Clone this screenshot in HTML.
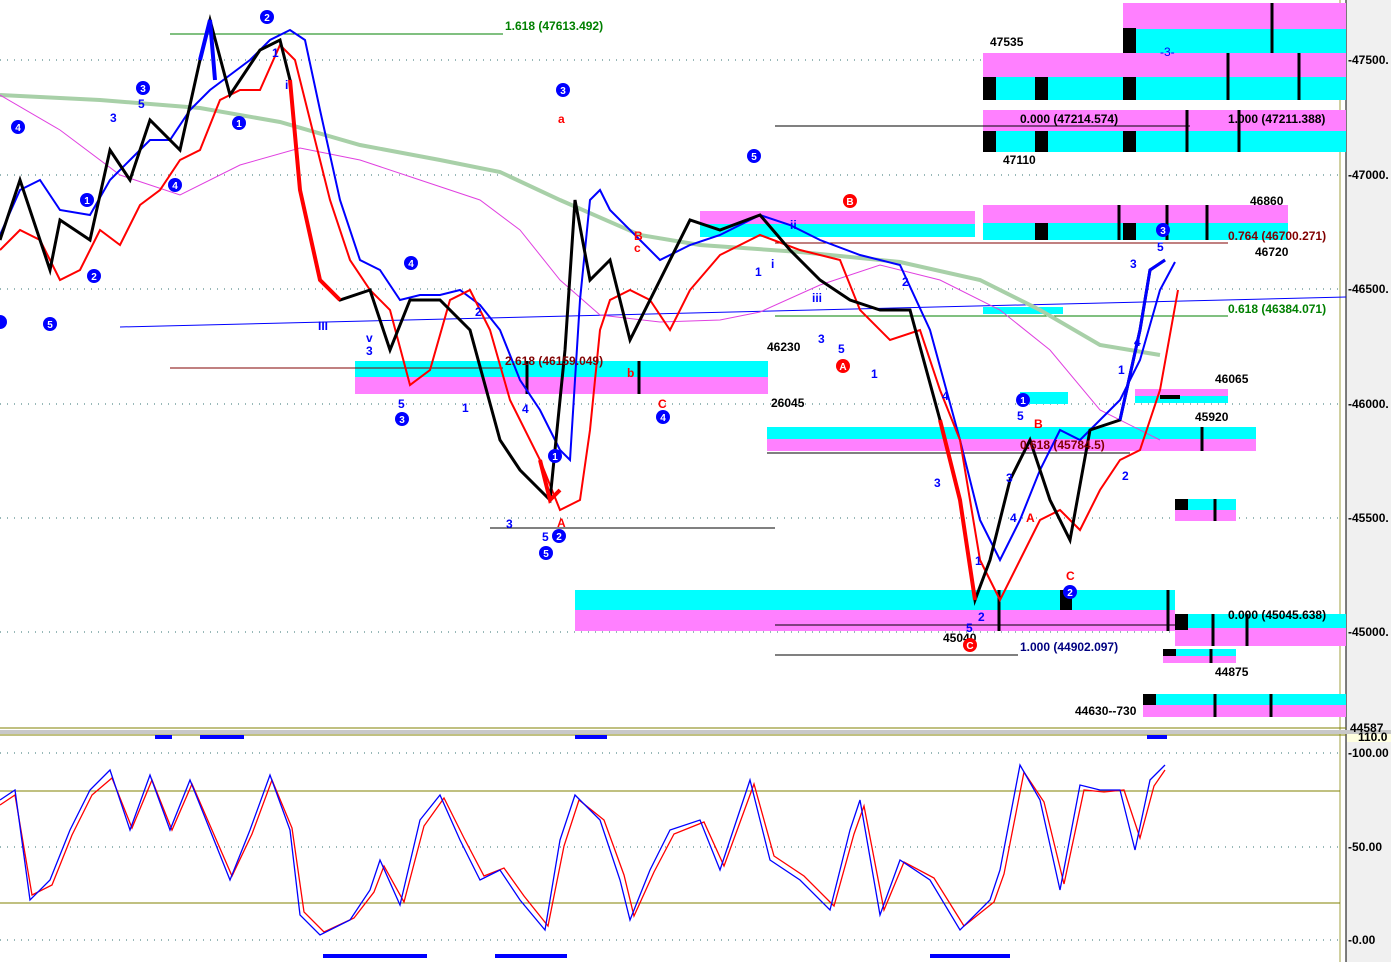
<!DOCTYPE html>
<html><head><meta charset="utf-8"><style>
html,body{margin:0;padding:0;background:#fff;}
svg{display:block;font-family:"Liberation Sans",sans-serif;}
.b{font-weight:bold;font-size:12px;}
</style></head><body>
<svg width="1391" height="962" viewBox="0 0 1391 962" xmlns="http://www.w3.org/2000/svg">
<rect width="1391" height="962" fill="#fff"/>
<!-- right axis -->
<rect x="1346" y="0" width="45" height="962" fill="#f0f0f0"/>
<line x1="1346" y1="0" x2="1346" y2="962" stroke="#000"/>
<line x1="1340" y1="0" x2="1340" y2="962" stroke="#a0a040"/>
<!-- gridlines -->
<g stroke="#307070" stroke-dasharray="1,6">
<line x1="0" y1="60" x2="1340" y2="60"/><line x1="0" y1="175" x2="1340" y2="175"/>
<line x1="0" y1="289" x2="1340" y2="289"/><line x1="0" y1="404" x2="1340" y2="404"/>
<line x1="0" y1="518" x2="1340" y2="518"/><line x1="0" y1="632" x2="1340" y2="632"/>
<line x1="0" y1="753" x2="1340" y2="753"/><line x1="0" y1="847" x2="1340" y2="847"/>
<line x1="0" y1="940" x2="1340" y2="940"/>
</g>
<!-- boxes -->
<g>
<rect x="1123" y="3" width="223" height="26" fill="#ff80ff"/><rect x="1123" y="29" width="223" height="24" fill="#00ffff"/>
<rect x="983" y="53" width="363" height="24" fill="#ff80ff"/><rect x="983" y="77" width="363" height="23" fill="#00ffff"/>
<rect x="983" y="110" width="363" height="21" fill="#ff80ff"/><rect x="983" y="131" width="363" height="21" fill="#00ffff"/>
<rect x="983" y="205" width="305" height="18" fill="#ff80ff"/><rect x="983" y="223" width="305" height="17" fill="#00ffff"/>
<rect x="700" y="211" width="275" height="13" fill="#ff80ff"/><rect x="700" y="224" width="275" height="13" fill="#00ffff"/>
<rect x="355" y="361" width="413" height="16" fill="#00ffff"/><rect x="355" y="377" width="413" height="17" fill="#ff80ff"/>
<rect x="767" y="427" width="489" height="12" fill="#00ffff"/><rect x="767" y="439" width="489" height="12" fill="#ff80ff"/>
<rect x="575" y="590" width="600" height="20" fill="#00ffff"/><rect x="575" y="610" width="600" height="21" fill="#ff80ff"/>
<rect x="1175" y="614" width="171" height="14" fill="#00ffff"/><rect x="1175" y="628" width="171" height="18" fill="#ff80ff"/>
<rect x="1135" y="389" width="93" height="7" fill="#ff80ff"/><rect x="1135" y="396" width="93" height="7" fill="#00ffff"/>
<rect x="1175" y="499" width="61" height="11" fill="#00ffff"/><rect x="1175" y="510" width="61" height="11" fill="#ff80ff"/>
<rect x="1163" y="649" width="73" height="7" fill="#00ffff"/><rect x="1163" y="656" width="73" height="7" fill="#ff80ff"/>
<rect x="1143" y="694" width="203" height="11" fill="#00ffff"/><rect x="1143" y="705" width="203" height="12" fill="#ff80ff"/>
<rect x="1020" y="392" width="48" height="12" fill="#00ffff"/>
<rect x="983" y="307" width="80" height="7" fill="#00ffff"/>
</g>
<!-- black markers -->
<g fill="#000">
<rect x="1123" y="28" width="13" height="25"/><rect x="983" y="77" width="13" height="23"/><rect x="1035" y="77" width="13" height="23"/><rect x="1123" y="77" width="13" height="23"/>
<rect x="983" y="131" width="13" height="21"/><rect x="1035" y="131" width="13" height="21"/><rect x="1123" y="131" width="13" height="21"/>
<rect x="1035" y="223" width="13" height="17"/><rect x="1123" y="223" width="13" height="17"/>
<rect x="1175" y="499" width="13" height="11"/><rect x="1175" y="614" width="13" height="16"/><rect x="1163" y="649" width="13" height="7"/><rect x="1143" y="694" width="13" height="11"/>
<rect x="1060" y="590" width="12" height="20"/><rect x="1160" y="395" width="20" height="4"/>
</g>
<g stroke="#000" stroke-width="3">
<line x1="1272" y1="3" x2="1272" y2="53"/><line x1="1228" y1="53" x2="1228" y2="100"/><line x1="1299" y1="53" x2="1299" y2="100"/>
<line x1="1187" y1="110" x2="1187" y2="152"/><line x1="1239" y1="110" x2="1239" y2="152"/>
<line x1="1119" y1="205" x2="1119" y2="240"/><line x1="1167" y1="205" x2="1167" y2="240"/><line x1="1207" y1="205" x2="1207" y2="240"/>
<line x1="1202" y1="427" x2="1202" y2="451"/><line x1="1215" y1="499" x2="1215" y2="521"/><line x1="1213" y1="614" x2="1213" y2="646"/><line x1="1247" y1="614" x2="1247" y2="646"/>
<line x1="1211" y1="649" x2="1211" y2="663"/><line x1="1215" y1="694" x2="1215" y2="717"/><line x1="1271" y1="694" x2="1271" y2="717"/>
<line x1="1168" y1="590" x2="1168" y2="631"/><line x1="999" y1="590" x2="999" y2="631"/><line x1="639" y1="361" x2="639" y2="394"/><line x1="527" y1="361" x2="527" y2="394"/>
</g>
<!-- horizontal fib lines -->
<line x1="170" y1="34" x2="503" y2="34" stroke="#008000"/>
<line x1="775" y1="126" x2="1190" y2="126" stroke="#000"/>
<line x1="775" y1="243" x2="1228" y2="243" stroke="#800000"/>
<line x1="775" y1="316" x2="1228" y2="316" stroke="#008000"/>
<line x1="120" y1="327" x2="1346" y2="297" stroke="#0000ff"/>
<line x1="170" y1="368" x2="503" y2="368" stroke="#800000"/>
<line x1="490" y1="528" x2="775" y2="528" stroke="#000"/>
<line x1="775" y1="625" x2="1175" y2="625" stroke="#000"/>
<line x1="775" y1="655" x2="1018" y2="655" stroke="#000"/>
<line x1="767" y1="453" x2="1130" y2="453" stroke="#000"/>
<!-- MAs -->
<polyline fill="none" stroke="#a8d0a8" stroke-width="4" points="0,95 100,100 200,108 280,122 360,145 440,160 500,172 560,200 640,235 700,245 800,252 900,262 980,280 1040,310 1100,345 1160,355"/>
<polyline fill="none" stroke="#e040e0" stroke-width="1" points="0,95 60,130 120,175 180,195 240,165 300,148 360,160 420,180 480,200 520,230 560,280 600,315 660,322 720,320 760,312 820,285 880,265 940,280 1000,310 1050,350 1100,410 1160,440"/>
<!-- blue/red envelopes -->
<polyline fill="none" stroke="#0000ff" stroke-width="2" points="0,235 20,190 40,180 60,210 90,215 110,180 130,160 150,140 170,140 190,110 210,90 230,75 250,60 270,40 290,30 305,40 320,110 340,200 360,260 380,270 400,300 420,295 440,295 460,290 480,305 500,330 520,380 540,410 560,450 570,460 580,300 590,200 600,190 610,210 640,240 660,260 690,245 720,235 760,215 790,225 820,240 860,255 900,265 930,330 960,440 980,520 1000,560 1020,520 1040,470 1060,430 1080,440 1100,420 1120,400 1140,360 1160,290 1175,262"/>
<polyline fill="none" stroke="#ff0000" stroke-width="2" points="0,250 20,230 40,240 60,280 80,270 100,230 120,245 140,205 160,190 180,160 200,150 220,100 240,90 260,90 280,45 295,60 310,120 330,200 350,260 370,290 390,310 410,385 430,370 450,300 470,290 490,330 510,400 540,460 560,510 580,500 590,430 600,330 610,300 630,290 650,300 670,330 690,290 720,255 760,235 800,250 840,260 860,310 890,340 920,330 940,390 960,440 980,560 1000,600 1020,560 1040,520 1060,510 1080,530 1100,490 1120,460 1140,450 1160,390 1178,290"/>
<!-- price path (candles approx) -->
<polyline fill="none" stroke="#000" stroke-width="3" points="0,240 20,180 50,270 60,220 90,240 110,150 130,180 150,120 180,150 200,60 210,20 230,95 260,50 280,40 290,80 300,190 320,280 340,300 370,290 390,350 410,300 440,300 470,330 500,440 520,470 550,500 565,350 575,200 590,280 610,260 630,340 660,280 690,220 720,230 760,215 790,250 820,280 850,300 880,310 910,310 940,420 960,500 975,600 990,560 1010,480 1030,440 1050,500 1070,540 1090,430 1120,420 1140,330 1150,270 1165,260"/>
<polyline fill="none" stroke="#ff0000" stroke-width="4" points="290,80 300,190 320,280 340,300"/>
<polyline fill="none" stroke="#ff0000" stroke-width="4" points="540,460 550,500 560,490"/>
<polyline fill="none" stroke="#ff0000" stroke-width="4" points="940,420 960,500 975,600"/>
<polyline fill="none" stroke="#0000ff" stroke-width="4" points="200,60 210,20 215,80"/>
<polyline fill="none" stroke="#0000ff" stroke-width="3" points="1120,420 1140,330 1150,270 1165,260"/>
<!-- labels -->
<g class="b">
<text x="505" y="30" fill="#008000">1.618 (47613.492)</text>
<text x="990" y="46">47535</text>
<text x="1020" y="123">0.000 (47214.574)</text>
<text x="1228" y="123">1.000 (47211.388)</text>
<text x="1003" y="164">47110</text>
<text x="1250" y="205">46860</text>
<text x="1228" y="240" fill="#800000">0.764 (46700.271)</text>
<text x="1255" y="256">46720</text>
<text x="1228" y="313" fill="#008000">0.618 (46384.071)</text>
<text x="767" y="351">46230</text>
<text x="505" y="365" fill="#800000">2.618 (46159.049)</text>
<text x="1215" y="383">46065</text>
<text x="771" y="407">26045</text>
<text x="1195" y="421">45920</text>
<text x="1020" y="449" fill="#800000">0.618 (45784.5)</text>
<text x="1228" y="619">0.000 (45045.638)</text>
<text x="943" y="642">45040</text>
<text x="1020" y="651" fill="#000080">1.000 (44902.097)</text>
<text x="1215" y="676">44875</text>
<text x="1075" y="715">44630--730</text>
<text x="1160" y="56" fill="#0000ff" font-weight="normal">-3-</text>
</g>
<!-- wave circles -->
<g fill="#0000ff">
<circle cx="18" cy="127" r="7"/><circle cx="143" cy="88" r="7"/><circle cx="87" cy="200" r="7"/><circle cx="175" cy="185" r="7"/><circle cx="94" cy="276" r="7"/><circle cx="50" cy="324" r="7"/><circle cx="0" cy="322" r="7"/>
<circle cx="239" cy="123" r="7"/><circle cx="267" cy="17" r="7"/><circle cx="563" cy="90" r="7"/><circle cx="411" cy="263" r="7"/><circle cx="402" cy="419" r="7"/>
<circle cx="555" cy="456" r="7"/><circle cx="559" cy="536" r="7"/><circle cx="546" cy="553" r="7"/><circle cx="663" cy="417" r="7"/><circle cx="754" cy="156" r="7"/>
<circle cx="1023" cy="400" r="7"/><circle cx="1070" cy="592" r="7"/><circle cx="1163" cy="230" r="7"/>
</g>
<g fill="#ff0000"><circle cx="850" cy="201" r="7"/><circle cx="843" cy="366" r="7"/><circle cx="970" cy="645" r="7"/></g>
<g font-size="10" font-weight="bold" fill="#fff" text-anchor="middle">
<text x="18" y="131">4</text><text x="143" y="92">3</text><text x="87" y="204">1</text><text x="175" y="189">4</text><text x="94" y="280">2</text><text x="50" y="328">5</text>
<text x="239" y="127">1</text><text x="267" y="21">2</text><text x="563" y="94">3</text><text x="411" y="267">4</text><text x="402" y="423">3</text>
<text x="555" y="460">1</text><text x="559" y="540">2</text><text x="546" y="557">5</text><text x="663" y="421">4</text><text x="754" y="160">5</text>
<text x="1023" y="404">1</text><text x="1070" y="596">2</text><text x="1163" y="234">3</text>
<text x="850" y="205">B</text><text x="843" y="370">A</text><text x="970" y="649">C</text>
</g>
<g font-size="12" font-weight="bold" fill="#0000ff">
<text x="110" y="122">3</text><text x="138" y="108">5</text><text x="272" y="57">1</text><text x="285" y="89">i</text><text x="318" y="330">III</text><text x="366" y="342">v</text><text x="366" y="355">3</text><text x="398" y="408">5</text><text x="462" y="412">1</text><text x="475" y="316">2</text><text x="522" y="413">4</text><text x="506" y="528">3</text><text x="542" y="541">5</text>
<text x="755" y="276">1</text><text x="771" y="268">i</text><text x="790" y="229">ii</text><text x="812" y="302">iii</text><text x="818" y="343">3</text><text x="838" y="353">5</text><text x="871" y="378">1</text><text x="902" y="286">2</text><text x="942" y="400">4</text><text x="934" y="487">3</text><text x="975" y="565">1</text><text x="978" y="621">2</text><text x="966" y="632">5</text><text x="1006" y="482">3</text><text x="1010" y="522">4</text><text x="1017" y="420">5</text><text x="1122" y="480">2</text><text x="1134" y="346">4</text><text x="1130" y="268">3</text><text x="1118" y="374">1</text><text x="1157" y="251">5</text>
</g>
<g font-size="12" font-weight="bold" fill="#ff0000">
<text x="558" y="123">a</text><text x="634" y="240">B</text><text x="634" y="252">c</text><text x="627" y="377">b</text><text x="658" y="408">C</text><text x="557" y="527">A</text><text x="1034" y="428">B</text><text x="1026" y="522">A</text><text x="1066" y="580">C</text>
</g>
<!-- panel divider -->
<line x1="0" y1="728" x2="1346" y2="728" stroke="#808000"/>
<rect x="0" y="730" width="1391" height="4" fill="#c8c8c8"/>
<line x1="0" y1="735" x2="1346" y2="735" stroke="#808000"/>
<line x1="0" y1="791" x2="1340" y2="791" stroke="#808000"/>
<line x1="0" y1="903" x2="1340" y2="903" stroke="#808000"/>
<g fill="#0000ff">
<rect x="155" y="735" width="17" height="4"/><rect x="200" y="735" width="44" height="4"/><rect x="575" y="735" width="32" height="4"/><rect x="1147" y="735" width="20" height="4"/>
<rect x="323" y="954" width="104" height="4"/><rect x="495" y="954" width="72" height="4"/><rect x="930" y="954" width="80" height="4"/>
</g>
<!-- stochastic -->
<polyline fill="none" stroke="#ff0000" stroke-width="1.3" points="0,805 15,795 32,895 52,885 72,835 92,795 112,778 132,828 152,780 172,830 192,784 212,830 232,876 252,834 272,780 292,828 304,912 324,932 354,918 374,892 384,866 404,902 424,826 444,798 464,838 484,876 504,868 524,896 548,926 564,846 579,800 604,820 624,875 634,916 654,872 674,834 704,822 724,866 754,784 774,856 804,876 834,906 854,834 864,806 884,910 904,862 934,878 964,926 994,902 1004,874 1024,772 1044,802 1064,884 1084,790 1104,792 1124,790 1140,838 1154,786 1165,770"/>
<polyline fill="none" stroke="#0000ff" stroke-width="1.3" points="0,800 15,790 30,900 50,880 70,830 90,790 110,770 130,830 150,775 170,830 190,780 210,830 230,880 250,830 270,775 290,830 300,915 320,935 350,920 370,890 380,860 400,905 420,820 440,795 460,840 480,880 500,870 520,900 545,930 560,840 575,795 600,820 620,880 630,920 650,870 670,830 700,820 720,870 750,780 770,860 800,880 830,910 850,830 860,800 880,915 900,860 930,880 960,930 990,900 1000,870 1020,765 1040,800 1060,890 1080,785 1100,790 1120,790 1135,850 1150,780 1165,765"/>
<!-- axis labels -->
<g class="b" fill="#000">
<text x="1348" y="64">-47500.</text><text x="1348" y="179">-47000.</text><text x="1348" y="293">-46500.</text><text x="1348" y="408">-46000.</text><text x="1348" y="522">-45500.</text><text x="1348" y="636">-45000.</text>
<text x="1350" y="732" fill="#000">44587</text>
<text x="1348" y="757">-100.00</text><text x="1348" y="851">-50.00</text><text x="1348" y="944">-0.00</text>
</g>
<rect x="1347" y="734" width="44" height="8" fill="#ffffe0"/>
<text x="1358" y="741" class="b">110.0</text>
</svg>
</body></html>
